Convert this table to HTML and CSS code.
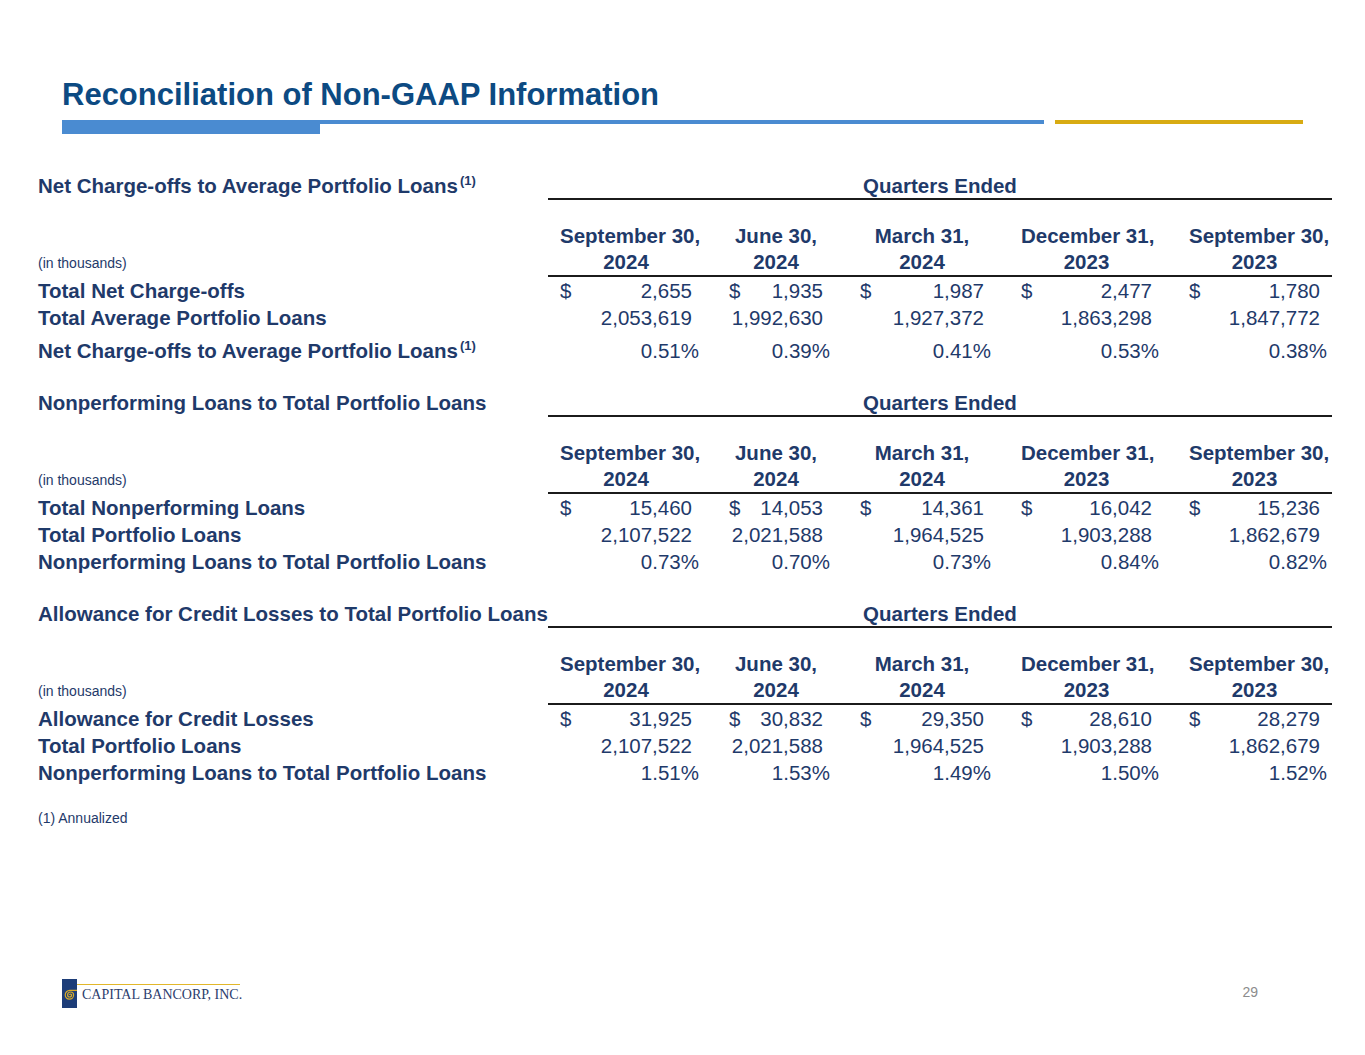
FILE: index.html
```html
<!DOCTYPE html>
<html lang="en">
<head>
<meta charset="utf-8">
<title>Reconciliation of Non-GAAP Information</title>
<link rel="stylesheet" href="styles.css">
</head>
<body>
<div class="slide">
  <h1 class="title">Reconciliation of Non-GAAP Information</h1>
  <div class="bars">
    <div class="bar-thick"></div>
    <div class="bar-thin"></div>
    <div class="bar-gold"></div>
  </div>

  <div class="report">
    <section class="sec sec-first">
      <div class="row title-row">
        <div class="label">Net Charge-offs to Average Portfolio Loans<sup>(1)</sup></div>
        <div class="qe">Quarters Ended</div>
      </div>
      <div class="row head">
        <div class="unit">(in thousands)</div>
        <div class="hc">September 30,<br>2024</div>
        <div class="hc">June 30,<br>2024</div>
        <div class="hc">March 31,<br>2024</div>
        <div class="hc">December 31,<br>2023</div>
        <div class="hc">September 30,<br>2023</div>
      </div>
      <div class="row">
        <div class="label">Total Net Charge-offs</div>
        <div class="cell"><span>$</span><span class="v">2,655</span></div>
        <div class="cell"><span>$</span><span class="v">1,935</span></div>
        <div class="cell"><span>$</span><span class="v">1,987</span></div>
        <div class="cell"><span>$</span><span class="v">2,477</span></div>
        <div class="cell"><span>$</span><span class="v">1,780</span></div>
      </div>
      <div class="row">
        <div class="label">Total Average Portfolio Loans</div>
        <div class="cell"><span class="v">2,053,619</span></div>
        <div class="cell"><span class="v">1,992,630</span></div>
        <div class="cell"><span class="v">1,927,372</span></div>
        <div class="cell"><span class="v">1,863,298</span></div>
        <div class="cell"><span class="v">1,847,772</span></div>
      </div>
      <div class="row row-sup">
        <div class="label">Net Charge-offs to Average Portfolio Loans<sup>(1)</sup></div>
        <div class="cell pct"><span class="v">0.51%</span></div>
        <div class="cell pct"><span class="v">0.39%</span></div>
        <div class="cell pct"><span class="v">0.41%</span></div>
        <div class="cell pct"><span class="v">0.53%</span></div>
        <div class="cell pct"><span class="v">0.38%</span></div>
      </div>
    </section>

    <section class="sec">
      <div class="row title-row">
        <div class="label">Nonperforming Loans to Total Portfolio Loans</div>
        <div class="qe">Quarters Ended</div>
      </div>
      <div class="row head">
        <div class="unit">(in thousands)</div>
        <div class="hc">September 30,<br>2024</div>
        <div class="hc">June 30,<br>2024</div>
        <div class="hc">March 31,<br>2024</div>
        <div class="hc">December 31,<br>2023</div>
        <div class="hc">September 30,<br>2023</div>
      </div>
      <div class="row">
        <div class="label">Total Nonperforming Loans</div>
        <div class="cell"><span>$</span><span class="v">15,460</span></div>
        <div class="cell"><span>$</span><span class="v">14,053</span></div>
        <div class="cell"><span>$</span><span class="v">14,361</span></div>
        <div class="cell"><span>$</span><span class="v">16,042</span></div>
        <div class="cell"><span>$</span><span class="v">15,236</span></div>
      </div>
      <div class="row">
        <div class="label">Total Portfolio Loans</div>
        <div class="cell"><span class="v">2,107,522</span></div>
        <div class="cell"><span class="v">2,021,588</span></div>
        <div class="cell"><span class="v">1,964,525</span></div>
        <div class="cell"><span class="v">1,903,288</span></div>
        <div class="cell"><span class="v">1,862,679</span></div>
      </div>
      <div class="row">
        <div class="label">Nonperforming Loans to Total Portfolio Loans</div>
        <div class="cell pct"><span class="v">0.73%</span></div>
        <div class="cell pct"><span class="v">0.70%</span></div>
        <div class="cell pct"><span class="v">0.73%</span></div>
        <div class="cell pct"><span class="v">0.84%</span></div>
        <div class="cell pct"><span class="v">0.82%</span></div>
      </div>
    </section>

    <section class="sec">
      <div class="row title-row">
        <div class="label">Allowance for Credit Losses to Total Portfolio Loans</div>
        <div class="qe">Quarters Ended</div>
      </div>
      <div class="row head">
        <div class="unit">(in thousands)</div>
        <div class="hc">September 30,<br>2024</div>
        <div class="hc">June 30,<br>2024</div>
        <div class="hc">March 31,<br>2024</div>
        <div class="hc">December 31,<br>2023</div>
        <div class="hc">September 30,<br>2023</div>
      </div>
      <div class="row">
        <div class="label">Allowance for Credit Losses</div>
        <div class="cell"><span>$</span><span class="v">31,925</span></div>
        <div class="cell"><span>$</span><span class="v">30,832</span></div>
        <div class="cell"><span>$</span><span class="v">29,350</span></div>
        <div class="cell"><span>$</span><span class="v">28,610</span></div>
        <div class="cell"><span>$</span><span class="v">28,279</span></div>
      </div>
      <div class="row">
        <div class="label">Total Portfolio Loans</div>
        <div class="cell"><span class="v">2,107,522</span></div>
        <div class="cell"><span class="v">2,021,588</span></div>
        <div class="cell"><span class="v">1,964,525</span></div>
        <div class="cell"><span class="v">1,903,288</span></div>
        <div class="cell"><span class="v">1,862,679</span></div>
      </div>
      <div class="row">
        <div class="label">Nonperforming Loans to Total Portfolio Loans</div>
        <div class="cell pct"><span class="v">1.51%</span></div>
        <div class="cell pct"><span class="v">1.53%</span></div>
        <div class="cell pct"><span class="v">1.49%</span></div>
        <div class="cell pct"><span class="v">1.50%</span></div>
        <div class="cell pct"><span class="v">1.52%</span></div>
      </div>
    </section>

    <p class="footnote">(1) Annualized</p>
  </div>

  <footer class="footer">
    <div class="logo">
      <svg class="logo-mark" width="15" height="29" viewBox="0 0 15 29" aria-hidden="true">
        <rect width="15" height="29" fill="#1d3d78"/>
        <path d="M7.6 16 A1 1 0 0 1 9.6 16 A2 2 0 0 1 5.6 16 A3 3 0 0 1 11.6 16 A4.2 4.2 0 0 1 3.2 16 A4.6 4.6 0 0 1 7.8 11.4 L15 11.4" fill="none" stroke="#d8ab2a" stroke-width="1.2"/>
      </svg>
      <div class="logo-text">CAPITAL BANCORP, INC.</div>
    </div>
    <div class="page-no">29</div>
  </footer>
</div>
</body>
</html>
```

FILE: styles.css
```css
html, body {
  margin: 0;
  padding: 0;
  background: #ffffff;
}

.slide {
  width: 1365px;
  height: 1055px;
  display: flex;
  flex-direction: column;
  font-family: "Liberation Sans", Arial, sans-serif;
  color: #1f3a6a;
}

.title {
  margin: 0;
  padding: 78px 0 0 62px;
  font-size: 31px;
  line-height: 34px;
  font-weight: bold;
  color: #0c4a82;
}

.bars {
  display: flex;
  align-items: flex-start;
  margin-top: 8px;
  padding-left: 62px;
}

.bar-thick {
  width: 258px;
  height: 14px;
  background: #4a8bd1;
}

.bar-thin {
  width: 724px;
  height: 4px;
  background: #4a8bd1;
}

.bar-gold {
  width: 248px;
  height: 4px;
  margin-left: 11px;
  background: #d8ab12;
}

.report {
  padding-left: 38px;
  margin-top: 40px;
}

.sec + .sec {
  margin-top: 27px;
}

.row {
  display: grid;
  grid-template-columns: 485px 132px 94px 124px 131px 131px;
  column-gap: 37px;
  font-size: 20.5px;
  line-height: 27px;
}

.label {
  font-weight: bold;
  white-space: nowrap;
}

sup {
  font-size: 13px;
  line-height: 0;
  vertical-align: 8px;
  margin-left: 2px;
}

.title-row {
  line-height: 24px;
}

.qe {
  grid-column: 2 / -1;
  margin: 0 -12px;
  text-align: center;
  font-weight: bold;
  border-bottom: 2px solid #1b1b1b;
}

.head {
  margin-top: 23px;
  line-height: 26px;
}

.head::after {
  content: "";
  grid-column: 2 / -1;
  height: 2px;
  margin: 0 -12px;
  background: #1b1b1b;
}

.unit {
  align-self: end;
  font-size: 14px;
  line-height: 24px;
}

.hc {
  text-align: center;
  font-weight: bold;
  white-space: nowrap;
}

.cell {
  display: flex;
  white-space: nowrap;
}

.cell .v {
  margin-left: auto;
}

.cell.pct {
  margin-right: -7px;
}

.row-sup {
  padding-top: 6px;
}

.footnote {
  margin: 23px 0 0;
  font-size: 14px;
  line-height: 18px;
}

.footer {
  margin-top: auto;
  display: flex;
  align-items: center;
  justify-content: space-between;
  padding: 0 107px 47px 62px;
}

.logo {
  display: flex;
  align-items: flex-start;
}

.logo-mark {
  display: block;
}

.logo-text {
  width: 158px;
  margin-top: 5px;
  padding: 2px 0 0 5px;
  border-top: 1.5px solid #e2b72a;
  font-family: "Liberation Serif", "Times New Roman", serif;
  font-size: 14px;
  line-height: 16px;
  color: #2b3d6d;
  white-space: nowrap;
}

.page-no {
  font-size: 14px;
  color: #8c8c8c;
  margin-bottom: 4px;
}
```
